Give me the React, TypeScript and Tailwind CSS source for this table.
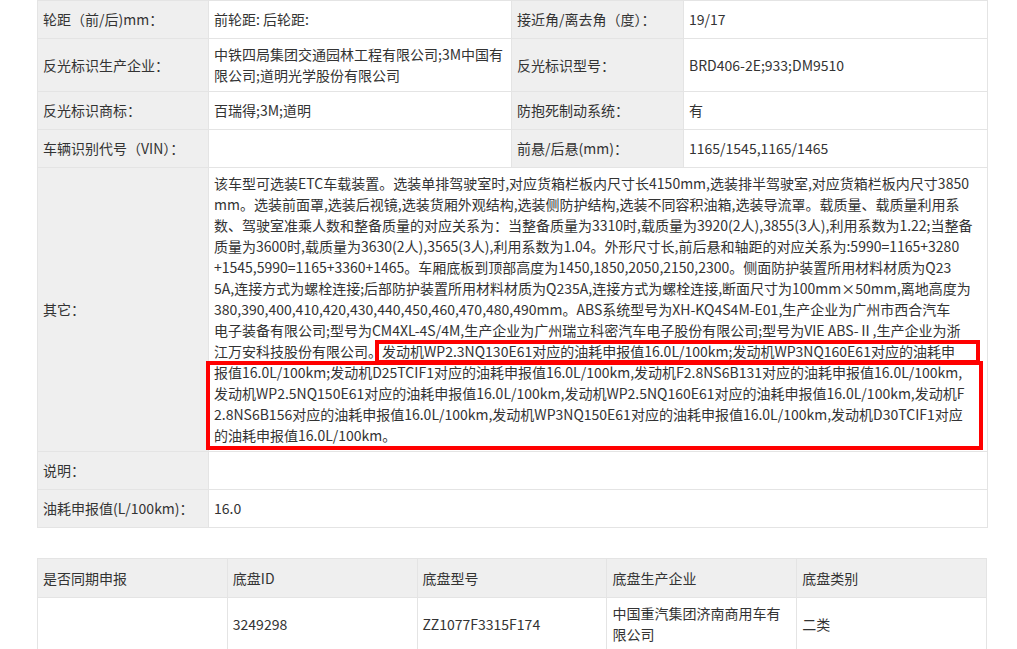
const FONT = { fontFamily: '"Microsoft YaHei", "Noto Sans CJK SC", "Noto Sans", sans-serif' };

const otherLines = [
  "该车型可选装ETC车载装置。选装单排驾驶室时,对应货箱栏板内尺寸长4150mm,选装排半驾驶室,对应货箱栏板内尺寸3850",
  "mm。选装前面罩,选装后视镜,选装货厢外观结构,选装侧防护结构,选装不同容积油箱,选装导流罩。载质量、载质量利用系",
  "数、驾驶室准乘人数和整备质量的对应关系为：当整备质量为3310时,载质量为3920(2人),3855(3人),利用系数为1.22;当整备",
  "质量为3600时,载质量为3630(2人),3565(3人),利用系数为1.04。外形尺寸长,前后悬和轴距的对应关系为:5990=1165+3280",
  "+1545,5990=1165+3360+1465。车厢底板到顶部高度为1450,1850,2050,2150,2300。侧面防护装置所用材料材质为Q23",
  "5A,连接方式为螺栓连接;后部防护装置所用材料材质为Q235A,连接方式为螺栓连接,断面尺寸为100mm×50mm,离地高度为",
  "380,390,400,410,420,430,440,450,460,470,480,490mm。ABS系统型号为XH-KQ4S4M-E01,生产企业为广州市西合汽车",
  "电子装备有限公司;型号为CM4XL-4S/4M,生产企业为广州瑞立科密汽车电子股份有限公司;型号为VIE ABS-Ⅱ,生产企业为浙",
  "江万安科技股份有限公司。发动机WP2.3NQ130E61对应的油耗申报值16.0L/100km;发动机WP3NQ160E61对应的油耗申",
  "报值16.0L/100km;发动机D25TCIF1对应的油耗申报值16.0L/100km,发动机F2.8NS6B131对应的油耗申报值16.0L/100km,",
  "发动机WP2.5NQ150E61对应的油耗申报值16.0L/100km,发动机WP2.5NQ160E61对应的油耗申报值16.0L/100km,发动机F",
  "2.8NS6B156对应的油耗申报值16.0L/100km,发动机WP3NQ150E61对应的油耗申报值16.0L/100km,发动机D30TCIF1对应",
  "的油耗申报值16.0L/100km。",
];

const chassisHead = ["是否同期申报", "底盘ID", "底盘型号", "底盘生产企业", "底盘类别"];

function Label({ children }: { children?: React.ReactNode }) {
  return (
    <td className="border border-[#e4e4e4] bg-[#efefef] px-[5px] py-[5px] align-middle">
      {children}
    </td>
  );
}

function Value({ children, colSpan }: { children?: React.ReactNode; colSpan?: number }) {
  return (
    <td colSpan={colSpan} className="border border-[#e4e4e4] bg-white px-[5px] py-[5px] align-middle">
      {children}
    </td>
  );
}

export default function App() {
  return (
    <div className="min-h-[649px] bg-white text-[14px] leading-[21px] text-[#333]" style={FONT}>
      <div className="ml-[37px] w-[950px]">
        <table className="w-[950px] table-fixed border-collapse">
          <colgroup>
            <col className="w-[171px]" />
            <col className="w-[303px]" />
            <col className="w-[172px]" />
            <col className="w-[304px]" />
          </colgroup>
          <tbody>
            <tr className="h-[38px]">
              <Label>轮距（前/后)mm：</Label>
              <Value>前轮距: 后轮距:</Value>
              <Label>接近角/离去角（度）：</Label>
              <Value>19/17</Value>
            </tr>
            <tr className="h-[53px]">
              <Label>反光标识生产企业：</Label>
              <Value>中铁四局集团交通园林工程有限公司;3M中国有限公司;道明光学股份有限公司</Value>
              <Label>反光标识型号：</Label>
              <Value>BRD406-2E;933;DM9510</Value>
            </tr>
            <tr className="h-[38px]">
              <Label>反光标识商标：</Label>
              <Value>百瑞得;3M;道明</Value>
              <Label>防抱死制动系统：</Label>
              <Value>有</Value>
            </tr>
            <tr className="h-[38px]">
              <Label>车辆识别代号（VIN）：</Label>
              <Value />
              <Label>前悬/后悬(mm)：</Label>
              <Value>1165/1545,1165/1465</Value>
            </tr>
            <tr>
              <Label>其它：</Label>
              <Value colSpan={3}>
                <div className="relative">
                  {otherLines.map((line, i) => (
                    <div key={i} className="whitespace-nowrap">
                      {line}
                    </div>
                  ))}
                  {/* red annotation boxes drawn over the text */}
                  <div className="pointer-events-none absolute left-[161px] top-[167px] h-[24px] w-[605px] border-[4px] border-[#ff0000]" />
                  <div className="pointer-events-none absolute left-[-8px] top-[188px] h-[89px] w-[777px] border-[4px] border-[#ff0000]" />
                </div>
              </Value>
            </tr>
            <tr className="h-[38px]">
              <Label>说明：</Label>
              <Value colSpan={3} />
            </tr>
            <tr className="h-[38px]">
              <Label>油耗申报值(L/100km)：</Label>
              <Value colSpan={3}>16.0</Value>
            </tr>
          </tbody>
        </table>

        <table className="mt-[30px] w-[950px] table-fixed border-collapse">
          <thead>
            <tr className="h-[39px]">
              {chassisHead.map((h) => (
                <th key={h} className="border border-[#e4e4e4] bg-[#efefef] px-[5px] py-[5px] text-left font-normal">
                  {h}
                </th>
              ))}
            </tr>
          </thead>
          <tbody>
            <tr className="h-[53px]">
              <Value />
              <Value>3249298</Value>
              <Value>ZZ1077F3315F174</Value>
              <Value>中国重汽集团济南商用车有限公司</Value>
              <Value>二类</Value>
            </tr>
          </tbody>
        </table>
      </div>
    </div>
  );
}
